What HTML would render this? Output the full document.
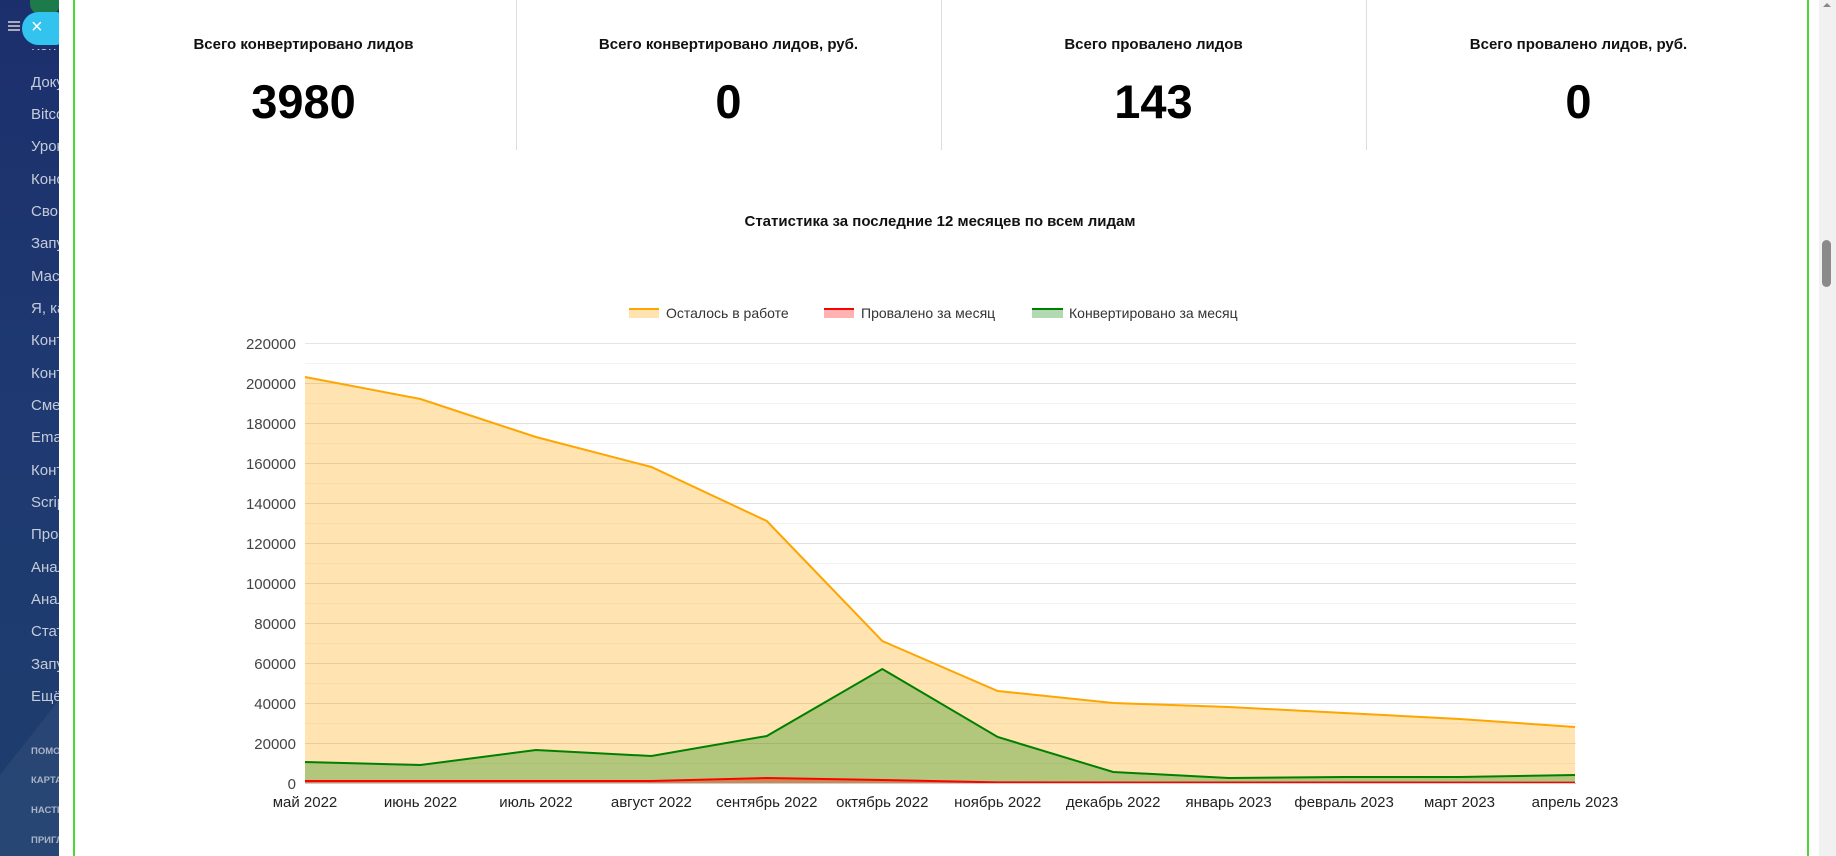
<!DOCTYPE html>
<html style="overflow:hidden"><head><meta charset="utf-8"><style>
*{margin:0;padding:0;box-sizing:border-box}
body{width:1836px;height:856px;overflow:hidden;background:#fff;font-family:"Liberation Sans",sans-serif;position:relative}
#side{position:absolute;left:0;top:0;width:59px;height:856px;background:linear-gradient(180deg,#1b2f6c 0%,#1f3a72 50%,#1d3d6c 100%);overflow:hidden}
#side .diag{position:absolute;left:0;top:0;width:59px;height:856px;background:rgba(255,255,255,0.05);clip-path:polygon(0 775px,59px 700px,59px 856px,0 856px)}
#side .it{position:absolute;left:31px;color:#c5ccd9;font-size:15px;white-space:nowrap;line-height:18px}
#side .sm{position:absolute;left:31px;color:#a9b3c6;font-size:9.5px;font-weight:bold;white-space:nowrap}
.gl{position:absolute;top:0;width:2px;height:856px;background:#4ad930}
.col{position:absolute;top:0;height:150px;text-align:center}
.col .t{position:absolute;top:36px;left:0;right:0;font-size:15px;font-weight:bold;color:#111}
.col .n{position:absolute;top:77px;left:0;right:0;font-size:47px;font-weight:bold;color:#000;line-height:50px}
.div{position:absolute;top:0;width:1px;height:150px;background:#ddd}
</style></head><body>
<div id="side"><div class="diag"></div>
<div style="position:absolute;left:30px;top:0;width:30px;height:14px;background:#1d7a4a;border-radius:0 0 10px 10px"></div>
<div style="position:absolute;left:8px;top:21px;width:12px;height:2px;background:#aab;box-shadow:0 4px 0 #aab,0 8px 0 #aab"></div>
<div style="position:absolute;left:22px;top:12px;width:40px;height:33px;background:#33c3ef;border-radius:17px 6px 6px 17px"></div>
<div style="position:absolute;left:31px;top:14px;color:#fff;font-size:20px;line-height:26px">×</div>
<div style="position:absolute;left:31px;top:49px;width:28px;height:5px;overflow:hidden"><div style="margin-top:-12px;color:#c5ccd9;font-size:15px">Кон</div></div>
<div class="it" style="top:74px">Доку</div>
<div class="it" style="top:106px">Bitco</div>
<div class="it" style="top:138px">Урок</div>
<div class="it" style="top:171px">Конс</div>
<div class="it" style="top:203px">Свои</div>
<div class="it" style="top:235px">Запу</div>
<div class="it" style="top:268px">Маст</div>
<div class="it" style="top:300px">Я, ка</div>
<div class="it" style="top:332px">Конт</div>
<div class="it" style="top:365px">Конт</div>
<div class="it" style="top:397px">Смен</div>
<div class="it" style="top:429px">Email</div>
<div class="it" style="top:462px">Конт</div>
<div class="it" style="top:494px">Scrip</div>
<div class="it" style="top:526px">Прос</div>
<div class="it" style="top:559px">Анал</div>
<div class="it" style="top:591px">Анал</div>
<div class="it" style="top:623px">Стат</div>
<div class="it" style="top:656px">Запу</div>
<div class="it" style="top:688px">Ещё</div>
<div class="sm" style="top:746px">ПОМОЩЬ</div>
<div class="sm" style="top:775px">КАРТА</div>
<div class="sm" style="top:805px">НАСТРОЙКИ</div>
<div class="sm" style="top:835px">ПРИГЛАСИТЬ</div>
</div>
<div class="gl" style="left:73px"></div>
<div class="gl" style="left:1807px"></div>
<div style="position:absolute;left:1819px;top:0;width:17px;height:856px;background:#f1f1f1"></div>
<div style="position:absolute;left:1823px;top:3px;width:0;height:0;border-left:4px solid transparent;border-right:4px solid transparent;border-bottom:4px solid #888"></div>
<div style="position:absolute;left:1822px;top:240px;width:9px;height:47px;background:#8a8a8a;border-radius:5px"></div>

<div class="col" style="left:91px;width:425px"><div class="t">Всего конвертировано лидов</div><div class="n">3980</div></div>
<div class="col" style="left:516px;width:425px"><div class="t">Всего конвертировано лидов, руб.</div><div class="n">0</div></div>
<div class="col" style="left:941px;width:425px"><div class="t">Всего провалено лидов</div><div class="n">143</div></div>
<div class="col" style="left:1366px;width:425px"><div class="t">Всего провалено лидов, руб.</div><div class="n">0</div></div>
<div class="div" style="left:516px"></div><div class="div" style="left:941px"></div><div class="div" style="left:1366px"></div>

<div style="position:absolute;left:540px;width:800px;top:213px;text-align:center;font-size:15px;font-weight:bold;color:#111">Статистика за последние 12 месяцев по всем лидам</div>

<svg width="1836" height="856" style="position:absolute;left:0;top:0;display:block" xmlns="http://www.w3.org/2000/svg">
<g font-family="Liberation Sans, sans-serif" font-size="14" fill="#333">
<rect x="629" y="308" width="30" height="10" fill="rgba(255,165,0,0.3)"/><rect x="629" y="308" width="30" height="2" fill="orange"/>
<text x="666" y="318">Осталось в работе</text>
<rect x="824" y="308" width="30" height="10" fill="rgba(255,0,0,0.3)"/><rect x="824" y="308" width="30" height="2" fill="red"/>
<text x="861" y="318">Провалено за месяц</text>
<rect x="1032" y="308" width="31" height="10" fill="rgba(0,128,0,0.3)"/><rect x="1032" y="308" width="31" height="2" fill="green"/>
<text x="1069" y="318">Конвертировано за месяц</text>
</g>
<g stroke-width="1">
<line x1="305" x2="1576" y1="343.5" y2="343.5" stroke="#e6e6e6"/><line x1="305" x2="1576" y1="363.5" y2="363.5" stroke="#f2f2f2"/>
<line x1="305" x2="1576" y1="383.5" y2="383.5" stroke="#e0e0e0"/><line x1="305" x2="1576" y1="403.5" y2="403.5" stroke="#f2f2f2"/>
<line x1="305" x2="1576" y1="423.5" y2="423.5" stroke="#e0e0e0"/><line x1="305" x2="1576" y1="443.5" y2="443.5" stroke="#f2f2f2"/>
<line x1="305" x2="1576" y1="463.5" y2="463.5" stroke="#e0e0e0"/><line x1="305" x2="1576" y1="483.5" y2="483.5" stroke="#f2f2f2"/>
<line x1="305" x2="1576" y1="503.5" y2="503.5" stroke="#e0e0e0"/><line x1="305" x2="1576" y1="523.5" y2="523.5" stroke="#f2f2f2"/>
<line x1="305" x2="1576" y1="543.5" y2="543.5" stroke="#e0e0e0"/><line x1="305" x2="1576" y1="563.5" y2="563.5" stroke="#f2f2f2"/>
<line x1="305" x2="1576" y1="583.5" y2="583.5" stroke="#e0e0e0"/><line x1="305" x2="1576" y1="603.5" y2="603.5" stroke="#f2f2f2"/>
<line x1="305" x2="1576" y1="623.5" y2="623.5" stroke="#e0e0e0"/><line x1="305" x2="1576" y1="643.5" y2="643.5" stroke="#f2f2f2"/>
<line x1="305" x2="1576" y1="663.5" y2="663.5" stroke="#e0e0e0"/><line x1="305" x2="1576" y1="683.5" y2="683.5" stroke="#f2f2f2"/>
<line x1="305" x2="1576" y1="703.5" y2="703.5" stroke="#e0e0e0"/><line x1="305" x2="1576" y1="723.5" y2="723.5" stroke="#f2f2f2"/>
<line x1="305" x2="1576" y1="743.5" y2="743.5" stroke="#e0e0e0"/><line x1="305" x2="1576" y1="763.5" y2="763.5" stroke="#f2f2f2"/>
</g>
<path d="M305,377 L420.5,399 L535.9,437 L651.4,467 L766.8,521 L882.3,641 L997.7,691 L1113.2,703 L1228.6,707 L1344.1,713 L1459.5,719 L1575,727 L1575,783 L305,783Z" fill="rgba(255,165,0,0.3)"/>
<path d="M305,377 L420.5,399 L535.9,437 L651.4,467 L766.8,521 L882.3,641 L997.7,691 L1113.2,703 L1228.6,707 L1344.1,713 L1459.5,719 L1575,727" fill="none" stroke="orange" stroke-width="2"/>
<path d="M305,762 L420.5,765 L535.9,750 L651.4,756 L766.8,736 L882.3,669 L997.7,737 L1113.2,772 L1228.6,778 L1344.1,777 L1459.5,777 L1575,775 L1575,783 L305,783Z" fill="rgba(0,128,0,0.3)"/>
<path d="M305,762 L420.5,765 L535.9,750 L651.4,756 L766.8,736 L882.3,669 L997.7,737 L1113.2,772 L1228.6,778 L1344.1,777 L1459.5,777 L1575,775" fill="none" stroke="green" stroke-width="2"/>
<path d="M305,781 L420.5,781 L535.9,781 L651.4,781 L766.8,778 L882.3,780 L997.7,782.4 L1575,782.6 L1575,783 L305,783Z" fill="rgba(255,0,0,0.3)"/>
<path d="M305,781 L420.5,781 L535.9,781 L651.4,781 L766.8,778 L882.3,780 L997.7,782.4 L1575,782.6" fill="none" stroke="red" stroke-width="2"/>
<line x1="305" x2="1576" y1="783.5" y2="783.5" stroke="#ccc"/>
<g font-family="Liberation Sans, sans-serif" font-size="15" fill="#444" text-anchor="end">
<text x="296" y="349">220000</text><text x="296" y="389">200000</text><text x="296" y="429">180000</text>
<text x="296" y="469">160000</text><text x="296" y="509">140000</text><text x="296" y="549">120000</text>
<text x="296" y="589">100000</text><text x="296" y="629">80000</text><text x="296" y="669">60000</text>
<text x="296" y="709">40000</text><text x="296" y="749">20000</text><text x="296" y="789">0</text>
</g>
<g font-family="Liberation Sans, sans-serif" font-size="15" fill="#222" text-anchor="middle">
<text x="305" y="807">май 2022</text><text x="420.5" y="807">июнь 2022</text><text x="535.9" y="807">июль 2022</text>
<text x="651.4" y="807">август 2022</text><text x="766.8" y="807">сентябрь 2022</text><text x="882.3" y="807">октябрь 2022</text>
<text x="997.7" y="807">ноябрь 2022</text><text x="1113.2" y="807">декабрь 2022</text><text x="1228.6" y="807">январь 2023</text>
<text x="1344.1" y="807">февраль 2023</text><text x="1459.5" y="807">март 2023</text><text x="1575" y="807">апрель 2023</text>
</g>
</svg>
</body></html>
